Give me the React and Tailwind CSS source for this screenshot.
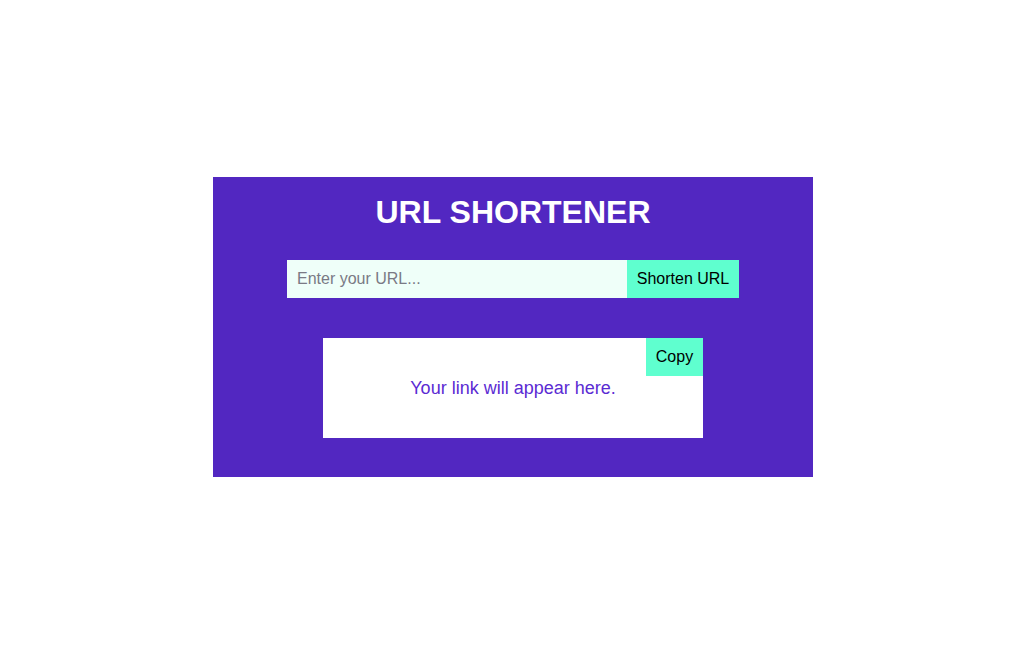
export default function App() {
  return (
    <div
      className="min-h-[666px] bg-white pl-[213px] pt-[177px]"
      style={{ fontFamily: '"Liberation Sans", Arial, sans-serif' }}
    >
      <div className="flex h-[300px] w-[600px] flex-col items-center bg-[#5227c1] pt-[17px]">
        <h1 className="text-[32px] font-bold leading-[36px] text-white">URL SHORTENER</h1>

        <div className="mt-[30px] flex h-[38px] w-[452px]">
          <input
            type="text"
            placeholder="Enter your URL..."
            className="h-full w-[340px] bg-[#effff9] px-[10px] text-base text-black outline-none placeholder:text-[#7a7a85]"
          />
          <button className="h-full w-[112px] bg-[#5fffcf] text-base text-black">Shorten URL</button>
        </div>

        <div className="relative mt-[40px] flex h-[100px] w-[380px] items-center justify-center bg-white">
          <p className="text-lg text-[#5b2bd3]">Your link will appear here.</p>
          <button className="absolute right-0 top-0 h-[38px] w-[57px] bg-[#5fffcf] text-base text-black">
            Copy
          </button>
        </div>
      </div>
    </div>
  );
}
